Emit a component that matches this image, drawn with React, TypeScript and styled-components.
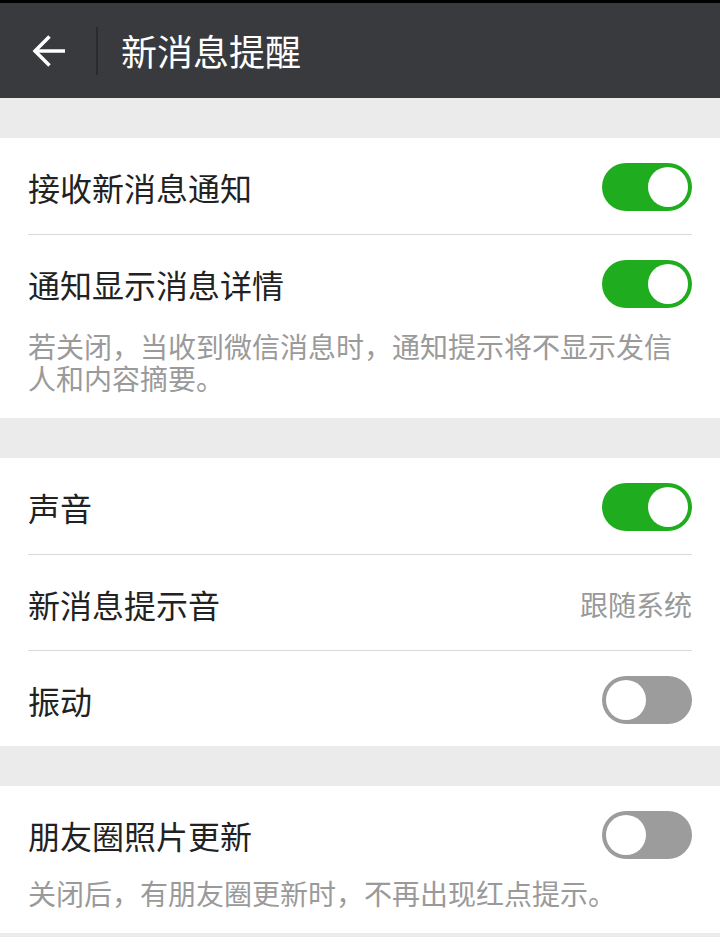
import React from "react";
import styled, { createGlobalStyle } from "styled-components";

const Global = createGlobalStyle`
  html, body { margin: 0; padding: 0; background: #ebebeb; }
  body { font-family: "Noto Sans CJK SC", "Noto Sans", sans-serif; }
  * { box-sizing: border-box; }
`;

const Page = styled.div`
  width: 720px;
  min-height: 937px;
  background: #ebebeb;
  display: flex;
  flex-direction: column;
`;

const StatusStrip = styled.div`
  height: 3px;
  background: #000;
`;

const Header = styled.header`
  height: 95px;
  background: #393a3e;
  display: flex;
  align-items: center;
  padding-left: 32px;
`;

const BackButton = styled.div`
  width: 34px;
  height: 34px;
  display: flex;
  align-items: center;
  justify-content: center;
`;

const HeaderDivider = styled.div`
  width: 2px;
  height: 48px;
  background: #2a2b2f;
  margin-left: 30px;
  margin-right: 23px;
`;

const Title = styled.h1`
  margin: 0;
  font-size: 36px;
  font-weight: 400;
  color: #fff;
  line-height: 1;
  padding-bottom: 2px;
`;

const Section = styled.section`
  background: #fff;
  margin-top: 40px;
`;

const Item = styled.div`
  padding: 0 28px;
`;

const ItemBody = styled.div<{ $first?: boolean }>`
  height: 96px;
  display: flex;
  align-items: center;
  justify-content: space-between;
  border-top: ${(p) => (p.$first ? "none" : "1px solid #d9d9d9")};
  padding-top: 2px;
`;

const Label = styled.span`
  font-size: 32px;
  color: #222;
  line-height: 1;
`;

const Value = styled.span`
  font-size: 28px;
  color: #999;
  line-height: 1;
`;

const Desc = styled.p<{ $offset: number }>`
  margin: ${(p) => p.$offset}px 0 0;
  padding: 0 28px 24px;
  font-size: 28px;
  line-height: 32px;
  color: #9a9a9a;
`;

const Track = styled.div<{ $on: boolean }>`
  width: 90px;
  height: 48px;
  border-radius: 24px;
  background: ${(p) => (p.$on ? "#1fac1f" : "#9c9c9c")};
  display: flex;
  align-items: center;
  justify-content: ${(p) => (p.$on ? "flex-end" : "flex-start")};
  padding: 0 4px;
`;

const Knob = styled.div`
  width: 40px;
  height: 40px;
  border-radius: 50%;
  background: #fff;
`;

const Toggle = ({ on }: { on: boolean }) => (
  <Track $on={on}>
    <Knob />
  </Track>
);

type Row = { label: string; on?: boolean; value?: string };

const Group = ({
  rows,
  desc,
  descOffset = 0,
}: {
  rows: Row[];
  desc?: string;
  descOffset?: number;
}) => (
  <Section>
    {rows.map((r, i) => (
      <Item key={r.label}>
        <ItemBody $first={i === 0}>
          <Label>{r.label}</Label>
          {r.value ? <Value>{r.value}</Value> : <Toggle on={!!r.on} />}
        </ItemBody>
      </Item>
    ))}
    {desc && <Desc $offset={descOffset}>{desc}</Desc>}
  </Section>
);

export default function App() {
  return (
    <Page>
      <Global />
      <StatusStrip />
      <Header>
        <BackButton>
          <svg width="34" height="34" viewBox="0 0 34 34" fill="none">
            <path d="M2 17 H33" stroke="#fff" strokeWidth="3.5" />
            <path d="M17.5 2.5 L3 17 L17.5 31.5" stroke="#fff" strokeWidth="3.5" />
          </svg>
        </BackButton>
        <HeaderDivider />
        <Title>新消息提醒</Title>
      </Header>
      <Group
        rows={[
          { label: "接收新消息通知", on: true },
          { label: "通知显示消息详情", on: true },
        ]}
        desc="若关闭，当收到微信消息时，通知提示将不显示发信人和内容摘要。"
      />
      <Group
        rows={[
          { label: "声音", on: true },
          { label: "新消息提示音", value: "跟随系统" },
          { label: "振动", on: false },
        ]}
      />
      <Group
        rows={[{ label: "朋友圈照片更新", on: false }]}
        desc="关闭后，有朋友圈更新时，不再出现红点提示。"
        descOffset={-5}
      />
    </Page>
  );
}
